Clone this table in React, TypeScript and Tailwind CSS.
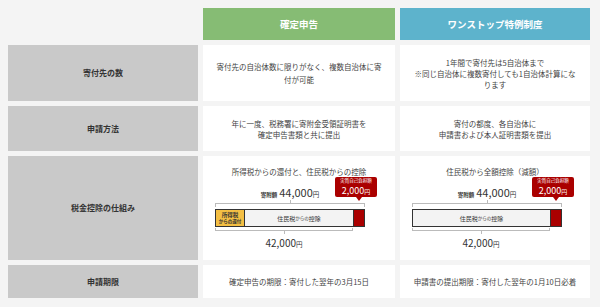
import React from "react";

const jp = "font-['Noto_Sans_CJK_JP','Noto_Sans',sans-serif]";

function Label({ children }: { children: React.ReactNode }) {
  return (
    <div className="bg-[#c9c9c9] flex items-center justify-center text-[8px] font-bold text-[#333]">
      {children}
    </div>
  );
}

function Cell({ children, leading = "leading-[11px]" }: { children: React.ReactNode; leading?: string }) {
  return (
    <div className={`bg-white flex items-center justify-center text-center text-[7.5px] text-[#444] px-3 ${leading}`}>
      <div>{children}</div>
    </div>
  );
}

function Diagram({ title, withIncomeTax }: { title: string; withIncomeTax?: boolean }) {
  return (
    <div className="bg-white flex flex-col items-center pt-[11px]">
      <div className="text-[7.5px] leading-[10px] text-[#444]">{title}</div>

      {/* 図 */}
      <div className="self-start ml-[12px] mt-[10px] w-[150px] relative flex flex-col">
        <div className="flex items-baseline justify-center leading-[10px] text-[#333]">
          <span className="text-[5.5px] font-bold mr-[2px]">寄附額</span>
          <span className="text-[11px]">44,000</span>
          <span className="text-[6.5px]">円</span>
        </div>
        <div className="self-center w-px h-[3px] bg-[#bbb]" />
        <div className="h-[4px] border-t border-x border-[#bbb]" />

        <div className="mt-[2px] h-[18px] border border-[#333] flex">
          {withIncomeTax && (
            <div className="w-[29px] bg-[#f4bf44] border-r border-[#333] flex flex-col items-center justify-center leading-[6px] text-[#333] font-bold">
              <span className="text-[5.5px]">所得税</span>
              <span className="text-[4.5px]">からの還付</span>
            </div>
          )}
          <div className="flex-1 bg-[#f3f3f3] flex items-center justify-center text-[6px] text-[#333]">
            住民税<span className="text-[4.5px]">からの</span>控除
          </div>
          <div className="w-[11px] bg-[#aa0000] border-l border-[#333]" />
        </div>

        <div className="mt-px w-[138px] h-[3px] border-b border-x border-[#bbb]" />
        <div className="ml-[69px] w-px h-[3px] bg-[#bbb]" />
        <div className="w-[138px] mt-[3px] text-center text-[10px] leading-[12px] text-[#333]">
          42,000<span className="text-[6.5px]">円</span>
        </div>

        {/* 実質自己負担額 */}
        <div className="absolute left-[120px] top-[-10px] w-[42px] h-[20px] rounded-[2px] bg-[#aa0000] text-white flex flex-col items-center">
          <div className="h-[7px] text-[4.5px] leading-[7px]">実質自己負担額</div>
          <div className="h-[13px] flex items-baseline leading-[13px]">
            <span className="text-[9px]">2,000</span>
            <span className="text-[6px]">円</span>
          </div>
          <div className="absolute left-[21px] bottom-[-4px] w-0 h-0 border-x-[3px] border-x-transparent border-t-[4px] border-t-[#aa0000]" />
        </div>
      </div>
    </div>
  );
}

export default function App() {
  return (
    <div className={`w-[600px] h-[307px] bg-[#f4f4f4] pt-[8px] pl-[8px] ${jp}`}>
      <div className="grid grid-cols-[190px_192px_190px] grid-rows-[32px_56px_45px_104px_33px] gap-x-[5px] gap-y-[5px]">
        <div />
        <div className="bg-[#86bc74] flex items-center justify-center text-white font-bold text-[9.5px]">
          確定申告
        </div>
        <div className="bg-[#5db3cc] flex items-center justify-center text-white font-bold text-[9.5px]">
          ワンストップ特例制度
        </div>

        <Label>寄付先の数</Label>
        <Cell leading="leading-[13px]">
          寄付先の自治体数に限りがなく、複数自治体に寄
          <br />
          付が可能
        </Cell>
        <Cell>
          1年間で寄付先は5自治体まで
          <br />
          ※同じ自治体に複数寄付しても1自治体計算にな
          <br />
          ります
        </Cell>

        <Label>申請方法</Label>
        <Cell>
          年に一度、税務署に寄附金受領証明書を
          <br />
          確定申告書類と共に提出
        </Cell>
        <Cell>
          寄付の都度、各自治体に
          <br />
          申請書および本人証明書類を提出
        </Cell>

        <Label>税金控除の仕組み</Label>
        <Diagram title="所得税からの還付と、住民税からの控除" withIncomeTax />
        <Diagram title="住民税から全額控除（減額）" />

        <Label>申請期限</Label>
        <Cell>確定申告の期限：寄付した翌年の3月15日</Cell>
        <Cell>申請書の提出期限：寄付した翌年の1月10日必着</Cell>
      </div>
    </div>
  );
}
